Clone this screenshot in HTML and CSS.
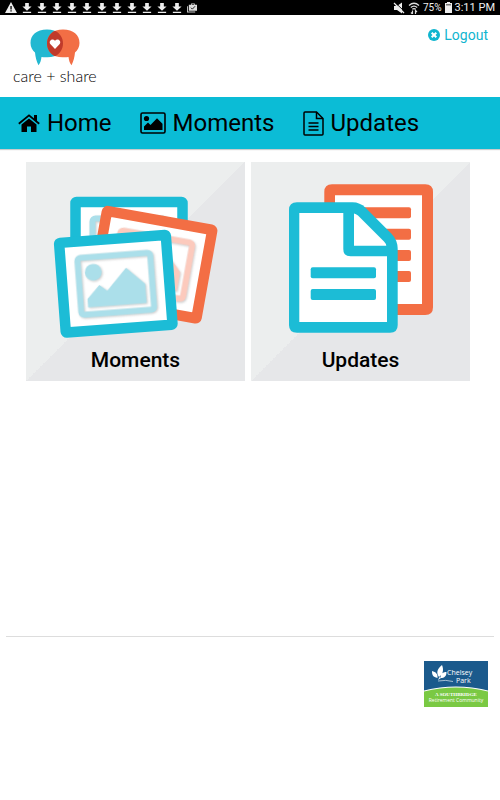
FILE: index.html
```html
<!DOCTYPE html>
<html lang="en">
<head>
    <meta charset="UTF-8">
    <meta name="viewport" content="width=device-width, initial-scale=1.0">
    <title>care + share</title>
    <link rel="stylesheet" href="styles.css">
</head>
<body>
    <!-- Shared icon shapes -->
    <svg class="defs" width="0" height="0" aria-hidden="true">
        <symbol id="download" viewBox="0 0 10 12">
            <path d="M3 1h4v4h3L5 9.500 0 5h3zM0.500 10.500h9V12h-9z" fill="#eee"/>
        </symbol>
        <symbol id="photo" viewBox="-60 -52 120 104" overflow="visible">
            <rect x="-53.500" y="-45" width="107" height="90" rx="1" fill="#fff"/>
            <rect x="-53.500" y="-45" width="107" height="90" rx="1" fill="none" stroke="currentColor" stroke-width="10.500" stroke-linejoin="round"/>
            <g class="photo-inner">
                <rect x="-36.500" y="-28.500" width="73" height="57" rx="3" fill="none" stroke="var(--pale)" stroke-width="6"/>
                <circle cx="-21.600" cy="-13.200" r="8.400" fill="var(--pale)"/>
                <path d="M-29.300 13-16.500 0-9 6.200 11.400-15.300 29.400 2.200V21.500H-29.300z" fill="var(--pale)"/>
            </g>
        </symbol>
    </svg>

    <div class="status-bar">
        <div class="status-icons">
            <svg class="status-warn" viewBox="0 0 12 11"><path d="M6 0l6 11H0z" fill="#eee"/><path d="M5.400 4h1.300v3.500H5.400zM5.400 8.300h1.300v1.300H5.400z" fill="#000"/></svg>
            <svg><use href="#download"/></svg>
            <svg><use href="#download"/></svg>
            <svg><use href="#download"/></svg>
            <svg><use href="#download"/></svg>
            <svg><use href="#download"/></svg>
            <svg><use href="#download"/></svg>
            <svg><use href="#download"/></svg>
            <svg><use href="#download"/></svg>
            <svg><use href="#download"/></svg>
            <svg><use href="#download"/></svg>
            <svg><use href="#download"/></svg>
            <svg viewBox="0 0 11 11"><path d="M0 4h1v6h8v1H0z" fill="#ccc"/><path d="M2 2.500h2.500V1h4v1.500H11V9H2z" fill="#ddd"/><path d="M5.300 2.500h2.400V1.800H5.300z" fill="#000"/><path d="M4.300 5.700l1.600 1.600 3-3.200" fill="none" stroke="#111"/></svg>
        </div>
        <div class="status-info">
            <svg width="12" height="12" viewBox="0 0 12 12"><path d="M1 4h3l5-3.500v11L4 8H1z" fill="#eee"/><path d="M1.500 0l10.500 10" stroke="#000"/><path d="M1 1l10 10" stroke="#eee" stroke-width="1.200"/></svg>
            <svg width="12" height="12" viewBox="0 0 12 12"><g fill="none" stroke="#ddd" stroke-width="1.200"><path d="M1 3.500q5-4.500 10 0M2.800 5.500q3.200-2.800 6.400 0M4.300 7.300q1.700-1.500 3.400 0"/><path d="M4.500 8.500V12M3 10.500L4.500 12M7.500 12V8.500L9 10"/></g></svg>
            <span class="battery-text">75%</span>
            <svg width="7" height="11" viewBox="0 0 7 11"><path d="M2 0h3v1h2v10H0V1h2z" fill="#eee"/><path d="M1 2h5v1.500H1z" fill="#777"/></svg>
            <span class="clock">3:11 PM</span>
        </div>
    </div>

    <header class="header">
        <div class="logo">
            <svg width="50" height="37" viewBox="30.500 28.500 50 37" aria-hidden="true">
                <path d="M47.500 29C37 29 31 34.500 31 42.500c0 4 2 7.500 4.500 9.500.5 5 1.500 9 3.500 12.700 1.800-2 2.500-4.500 3-8.200 2 .4 4 .4 6 .3C58 56.500 63.500 51 63.500 43S58 29 47.500 29z" fill="#22b8d1"/>
                <path d="M63.500 29C74 29 80 34.500 80 42.500c0 4-2 7.500-4.500 9.500-.5 5-1.500 9-3.500 12.700-1.800-2-2.500-4.500-3-8.200-2 .4-4 .4-6 .3C53 56.500 47.500 51 47.500 43S53 29 63.500 29z" fill="#f26e45"/>
                <path d="M55.500 30.300c5 2.700 8 7.300 8 12.700s-3 10.200-8 12.800c-5-2.600-8-7.400-8-12.800s3-10 8-12.700z" fill="#c03a2b"/>
                <path d="M55.500 48.500l-4.500-4.700c-2.500-3 1.700-6.800 4.500-3.500 2.800-3.300 7 .5 4.500 3.500z" fill="#fff"/>
            </svg>
            <span class="logo-text">care + share</span>
        </div>
        <a class="logout" href="#">
            <svg width="12" height="12" viewBox="0 0 12 12" aria-hidden="true"><circle cx="6" cy="6" r="6" fill="currentColor"/><path d="M3.700 3.700l4.600 4.600M8.300 3.700L3.700 8.300" stroke="#fff" stroke-width="2"/></svg>
            Logout
        </a>
    </header>

    <nav class="nav">
        <a href="#">
            <svg width="22" height="20" viewBox="0 0 22 20" aria-hidden="true"><path d="M11 5.500l7.500 6v7.500H13v-5.500H9V19H3.500v-7.500z"/><path d="M.8 10.800L11 2.300l10.200 8.500" fill="none" stroke="#000" stroke-width="1.800"/><path d="M16 2h3v7l-3-2.500z"/></svg>
            Home
        </a>
        <a href="#">
            <svg width="26" height="22" viewBox="0 0 26 22" aria-hidden="true"><rect x="1" y="1" width="24" height="20" rx="1.500" fill="none" stroke="#000" stroke-width="1.600"/><circle cx="6.500" cy="6.500" r="2.600"/><path d="M4 18v-3.500l4-4 2.500 2.500L17 6.200l5.500 5.500V18z"/></svg>
            Moments
        </a>
        <a href="#">
            <svg width="21" height="25" viewBox="0 0 21 25" aria-hidden="true"><g fill="none" stroke="#000" stroke-width="1.500"><path d="M2 1h11.500L20 7.500V23q0 1-1 1H2q-1 0-1-1V2q0-1 1-1z"/><path d="M13.500 1v6.500H20M5.500 12h10M5.500 15.500h10M5.500 19h10"/></g></svg>
            Updates
        </a>
    </nav>

    <main class="tiles">
        <a class="tile" href="#">
            <svg viewBox="0 0 219 182" aria-hidden="true">
                <g class="photo-blue" transform="translate(103 85)"><use href="#photo" x="-60" y="-52" width="120" height="104"/></g>
                <g class="photo-orange" transform="translate(125.700 102.700) rotate(10.200)"><use href="#photo" x="-60" y="-52" width="120" height="104"/></g>
                <g class="photo-blue" transform="translate(89.800 121.800) rotate(-4.300)"><use href="#photo" x="-60" y="-52" width="120" height="104"/></g>
            </svg>
            <span class="tile-label">Moments</span>
        </a>
        <a class="tile" href="#">
            <svg viewBox="0 0 219 182" aria-hidden="true">
                <rect x="78.700" y="27.800" width="98" height="120" rx="2" fill="#fff"/>
                <path d="M73.300 30q0-7.700 7.700-7.700h93.300q7.700 0 7.700 7.700v115.300q0 7.700-7.700 7.700H81q-7.700 0-7.700-7.700zM84 33.300V142h87V33.300z" fill="#f36e44" fill-rule="evenodd"/>
                <g fill="#f36e44">
                    <rect x="95" y="45.300" width="65" height="11" rx="2"/>
                    <rect x="95" y="66.700" width="65" height="11" rx="2"/>
                    <rect x="95" y="88" width="65" height="11" rx="2"/>
                    <rect x="95" y="109" width="65" height="11" rx="2"/>
                </g>
                <path d="M46 40.300h55.500q7.500 0 13 5.500l26 26q6.200 6.500 6.200 15.200V163q0 7.700-7.700 7.700H46q-8 0-8-7.700V48q0-7.700 8-7.700z" fill="#1cbcd6"/>
                <path d="M48.300 51H92.300v36q0 7.300 7.300 7.300H136V160H48.300zM103 51.500q2 .3 4 2l26 26q2 2 2.300 4.200H103z" fill="#fff"/>
                <g fill="#1cbcd6">
                    <rect x="59.700" y="105.300" width="65.300" height="11" rx="2"/>
                    <rect x="59.700" y="127" width="65.300" height="11" rx="2"/>
                </g>
            </svg>
            <span class="tile-label">Updates</span>
        </a>
    </main>

    <footer class="footer">
        <svg class="partner" width="64" height="46" viewBox="0 0 64 46" role="img" aria-label="Chelsey Park">
            <rect width="64" height="46" fill="#1b5a8c"/>
            <path d="M0 30Q32 22 64 30V46H0z" fill="#7ac943"/>
            <path d="M0 30Q32 22 64 30" fill="none" stroke="#fff" stroke-width="1.200"/>
            <path d="M15 16c-3-4-2-8 3-12 2 5 1 9-3 12zM13.500 17C9 16 8 14 8 10c4 1 6 3 5.500 7zM16.500 17c0-4 2-6 6-6 0 4-2 6-6 6zM14 19l1.500-3 1.500 1z" fill="#fff"/>
            <path d="M14 20q8-1.500 15 .5" fill="none" stroke="#dfe9f0" stroke-width=".7"/>
            <text class="partner-name" x="23" y="14">Chelsey</text>
            <text class="partner-name" x="32" y="22">Park</text>
            <text class="partner-brand" x="32" y="35" text-anchor="middle">A SOUTHBRIDGE</text>
            <text class="partner-tag" x="32" y="41" text-anchor="middle">Retirement Community</text>
        </svg>
    </footer>
</body>
</html>
```

FILE: styles.css
```css
* {
    box-sizing: border-box;
}
body {
    display: flex;
    flex-direction: column;
    min-height: 100vh;
    margin: 0;
    background: #fff;
    color: #000;
    font-family: Roboto, "Liberation Sans", sans-serif;
}
a {
    color: inherit;
    text-decoration: none;
}
.defs {
    position: absolute;
}

/* status bar */
.status-bar {
    display: flex;
    justify-content: space-between;
    align-items: center;
    height: 15px;
    padding: 0 5px;
    background: #000;
    color: #eee;
}
.status-icons,
.status-info {
    display: flex;
    align-items: center;
}
.status-icons {
    gap: 5px;
}
.status-icons svg {
    width: 10px;
    height: 11px;
}
.status-icons .status-warn {
    width: 12px;
}
.status-info {
    gap: 3px;
}
.battery-text {
    font-size: 10px;
    line-height: 15px;
}
.clock {
    font-size: 11px;
    line-height: 15px;
}

/* header */
.header {
    display: flex;
    justify-content: space-between;
    align-items: flex-start;
    height: 82px;
    padding: 12px 12px 0;
}
.logo {
    display: flex;
    flex-direction: column;
    align-items: center;
    padding: 2px 0 0 1px;
}
.logo-text {
    font-family: Lato, sans-serif;
    font-size: 16px;
    font-weight: 300;
    line-height: 20px;
}
.logout {
    display: flex;
    align-items: center;
    gap: 4px;
    color: #10b5cf;
    font-size: 14px;
    line-height: 16px;
}

/* navigation */
.nav {
    display: flex;
    align-items: center;
    gap: 28px;
    height: 52px;
    padding: 0 18px;
    background: #0bbcd6;
    box-shadow: 0 1px 1px #ccc;
    font-size: 24px;
    line-height: 28px;
}
.nav a {
    display: flex;
    align-items: center;
    gap: 7px;
}

/* tiles */
.tiles {
    display: grid;
    grid-template-columns: 1fr 1fr;
    align-content: start;
    gap: 6px;
    flex: 1;
    padding: 13px 30px 13px 26px;
}
.tile {
    display: flex;
    flex-direction: column;
    aspect-ratio: 1;
    background: linear-gradient(to bottom right, #eceeee 50%, #e6e7e9 50%);
}
.tile svg {
    display: block;
    width: 100%;
}
.tile-label {
    font-size: 21px;
    font-weight: 500;
    line-height: 32px;
    text-align: center;
}
.photo-blue {
    --pale: #abdfea;
    color: #1cbcd6;
}
.photo-orange {
    --pale: #fccabd;
    color: #f36e44;
}
.photo-inner {
    filter: drop-shadow(1px 1px 1px #ccc);
}

/* footer */
.footer {
    display: flex;
    justify-content: flex-end;
    align-items: flex-start;
    height: 164px;
    margin: 0 6px;
    padding: 24px 6px;
    border-top: 1px solid #ddd;
}
.partner text {
    fill: #fff;
    font-family: "Open Sans", sans-serif;
}
.partner .partner-name {
    font-size: 7px;
}
.partner .partner-brand {
    font-family: "Liberation Serif", serif;
    font-size: 5px;
    font-weight: bold;
}
.partner .partner-tag {
    font-size: 5px;
}
```
